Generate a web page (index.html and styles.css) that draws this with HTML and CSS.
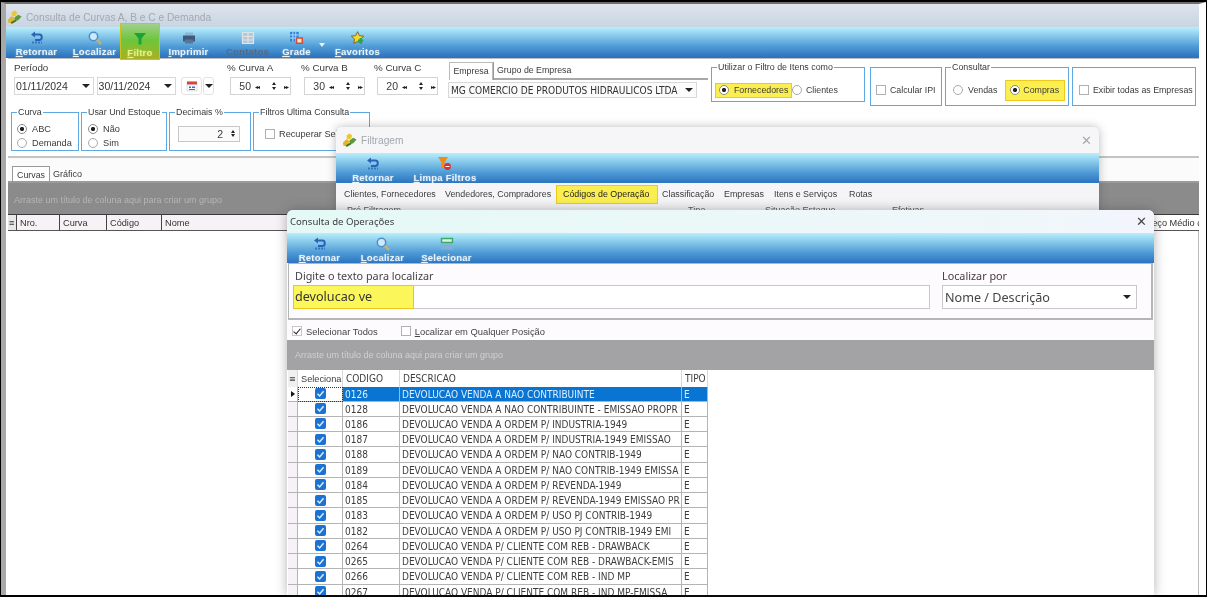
FILE: index.html
```html
<!DOCTYPE html>
<html lang="pt-BR">
<head>
<meta charset="utf-8">
<title>Consulta de Curvas A, B e C e Demanda</title>
<link rel="stylesheet" href="styles.css">
</head>
<body>
<svg class="defs" width="0" height="0" aria-hidden="true">
  <symbol id="i-back" viewBox="0 0 14 13"><path d="M3 3H9.5C12.5 3 12.5 8.5 9.5 8.5H5" fill="none" stroke="#2a62b8" stroke-width="2"/><path d="M5 0L1 3L5 6Z" fill="#2a62b8"/><path d="M2 11H12" stroke="#2a62b8" stroke-width="2" stroke-dasharray="2 1" opacity=".75"/></symbol>
  <symbol id="i-find" viewBox="0 0 14 14"><circle cx="5.5" cy="5.5" r="4.2" fill="#cfe8fa" stroke="#4a8ecb" stroke-width="1.5"/><path d="M8.8 8.8L13 13" stroke="#c9b27a" stroke-width="2"/></symbol>
  <symbol id="i-funnel" viewBox="0 0 14 14"><path d="M1 1H13L8.5 6.5V12.5H5.5V6.5Z" fill="#1aa33a"/></symbol>
  <symbol id="i-print" viewBox="0 0 14 13"><path d="M3 1H11V4H3Z" fill="#8fb4d8"/><path d="M1 4H13V10H1Z" fill="#3c5a7a"/><path d="M3 8H11V12H3Z" fill="#5a7692"/></symbol>
  <symbol id="i-grid" viewBox="0 0 14 14"><path d="M1.5 1.5H12.5V12.5H1.5ZM1.5 5.5H12.5M1.5 9H12.5M7 1.5V12.5" fill="#b9c6d4" stroke="#dde4ea" stroke-width="1.2"/></symbol>
  <symbol id="i-table" viewBox="0 0 16 14"><path d="M0 0H10V11H0Z" fill="#2b85dd"/><path d="M3.3 0V11M6.6 0V11M0 3.5H10M0 7H10" stroke="#d8ecfb" stroke-width=".9"/><path d="M7.5 7H14V13H7.5Z" fill="#f4e4d8" stroke="#d84a28" stroke-width="1.6"/></symbol>
  <symbol id="i-star" viewBox="0 0 16 16"><path d="M7.5 .8L9.6 5.3L14.6 5.9L10.9 9.3L11.9 14.2L7.5 11.8L3.1 14.2L4.1 9.3L.4 5.9L5.4 5.3Z" fill="#f5d832" stroke="#7a5a18" stroke-width="1"/><path d="M11 8V14M8 11H14" stroke="#28a83a" stroke-width="2.4"/></symbol>
  <symbol id="i-clear" viewBox="0 0 14 14"><path d="M0 0H10L6.5 5.5V11H3.5V5.5Z" fill="#f08a12"/><circle cx="9.5" cy="9.5" r="3.4" fill="#e52c2c"/><path d="M7.5 9.5H11.5" stroke="#fff" stroke-width="1.2"/></symbol>
  <symbol id="i-select" viewBox="0 0 14 13"><path d="M1.5 1H12.5V5H1.5Z" fill="#d8f0e0" stroke="#3aaa68" stroke-width="1.4"/><path d="M1 7H13V12H1Z" fill="#7fb0da"/></symbol>
  <symbol id="i-app" viewBox="0 0 16 16"><path d="M5 2L8.5 .5L11 3L9 7L5 6Z" fill="#e8c838"/><path d="M1 10L5 6.5L8.5 9L5 14L1.5 13.5Z" fill="#e2b52c"/><path d="M8 8L12 5L15.5 7L12 11L8.5 12Z" fill="#5a9a38"/><path d="M4 13L9 10L10 12L5 15Z" fill="#3f7a2c"/></symbol>
  <symbol id="i-cal" viewBox="0 0 12 12"><path d="M1 2H11V11H1Z" fill="#f4f7fb" stroke="#c8d4e0" stroke-width=".6"/><path d="M1 1.5H11V4.5H1Z" fill="#d8443a"/><path d="M3 6.5H5V8H3ZM6 6.5H9V8H6ZM3 9H9V10H3Z" fill="#2b72c8"/></symbol>
  <symbol id="i-check" viewBox="0 0 10 10"><path d="M2.2 5.2L4.2 7.2L7.8 3" fill="none" stroke="#d8ecff" stroke-width="1.4"/></symbol>
</svg>

<div class="screen">
  <main class="window">
    <header class="titlebar main-title">
      <svg class="app-icon"><use href="#i-app"/></svg>
      <span class="title-muted">Consulta de Curvas A, B e C e Demanda</span>
    </header>
    <nav class="toolbar main-tools">
      <div class="tool w-ret"><svg class="tool-icon"><use href="#i-back"/></svg><span><u>R</u>etornar</span></div>
      <div class="tool w-loc"><svg class="tool-icon"><use href="#i-find"/></svg><span><u>L</u>ocalizar</span></div>
      <div class="tool tool-active"><svg class="tool-icon"><use href="#i-funnel"/></svg><span><u>F</u>iltro</span></div>
      <div class="tool w-imp"><svg class="tool-icon"><use href="#i-print"/></svg><span><u>I</u>mprimir</span></div>
      <div class="tool tool-off w-con"><svg class="tool-icon"><use href="#i-grid"/></svg><span>Contatos</span></div>
      <div class="tool w-gra"><svg class="tool-icon"><use href="#i-table"/></svg><span><u>G</u>rade</span></div>
      <div class="tool-drop"></div>
      <div class="tool w-fav"><svg class="tool-icon"><use href="#i-star"/></svg><span><u>F</u>avoritos</span></div>
    </nav>

    <section class="filters">
      <div class="row-one">
        <div class="periodo">
          <div class="label">Período</div>
          <div class="controls">
            <div class="combo date"><span>01/11/2024</span><i class="caret"></i></div>
            <div class="combo date"><span>30/11/2024</span><i class="caret"></i></div>
            <div class="cal-btn"><svg class="cal-icon"><use href="#i-cal"/></svg></div>
            <div class="cal-drop"><i class="caret"></i></div>
          </div>
        </div>
        <div class="curva c-a"><div class="label">% Curva A</div><div class="spin"><b>50</b><i>◂◂</i><em><s></s><s class="down"></s></em><i>▸▸</i></div></div>
        <div class="curva c-b"><div class="label">% Curva B</div><div class="spin"><b>30</b><i>◂◂</i><em><s></s><s class="down"></s></em><i>▸▸</i></div></div>
        <div class="curva c-c"><div class="label">% Curva C</div><div class="spin"><b>20</b><i>◂◂</i><em><s></s><s class="down"></s></em><i>▸▸</i></div></div>
        <div class="empresa">
          <div class="emp-tabs"><span class="emp-tab">Empresa</span><span class="emp-other">Grupo de Empresa</span></div>
          <div class="combo emp-combo"><span>MG COMERCIO DE PRODUTOS HIDRAULICOS LTDA</span><i class="caret"></i></div>
        </div>
        <div class="group g-util">
          <span class="legend">Utilizar o Filtro de Itens como</span>
          <div class="hl hl-forn"><i class="radio on"></i><span>Fornecedores</span></div>
          <i class="radio"></i><span class="lbl-cli">Clientes</span>
        </div>
        <div class="group g-ipi"><i class="check"></i><span>Calcular IPI</span></div>
        <div class="group g-cons">
          <span class="legend">Consultar</span>
          <i class="radio"></i><span class="lbl-ven">Vendas</span>
          <div class="hl hl-comp"><i class="radio on"></i><span>Compras</span></div>
        </div>
        <div class="group g-exib"><i class="check"></i><span>Exibir todas as Empresas</span></div>
      </div>
      <div class="row-two">
        <div class="group g2 g-curva"><span class="legend">Curva</span>
          <div class="opt"><i class="radio on"></i><span>ABC</span></div>
          <div class="opt"><i class="radio"></i><span>Demanda</span></div>
        </div>
        <div class="group g2 g-und"><span class="legend">Usar Und Estoque</span>
          <div class="opt"><i class="radio on"></i><span>Não</span></div>
          <div class="opt"><i class="radio"></i><span>Sim</span></div>
        </div>
        <div class="group g2 g-dec"><span class="legend">Decimais %</span>
          <div class="dec-spin"><b>2</b><em><s></s><s class="down"></s></em></div>
        </div>
        <div class="group g2 g-ult"><span class="legend">Filtros Ultima Consulta</span>
          <i class="check"></i><span>Recuperar Seleção</span>
        </div>
      </div>
    </section>

    <div class="page-tabs"><span class="page-tab">Curvas</span><span class="page-other">Gráfico</span></div>
    <div class="group-band">Arraste um título de coluna aqui para criar um grupo</div>
    <div class="main-head">
      <span class="mh-ind">≡</span><span class="mh-nro">Nro.</span><span class="mh-cur">Curva</span><span class="mh-cod">Código</span><span class="mh-nome">Nome</span><span class="mh-pm">Preço Médio de</span>
    </div>
  </main>

  <aside class="dialog d-filtro">
    <header class="titlebar filtro-title">
      <svg class="app-icon"><use href="#i-app"/></svg>
      <span class="title-muted">Filtragem</span>
      <span class="close muted">✕</span>
    </header>
    <nav class="toolbar filtro-tools">
      <div class="tool w-fret"><svg class="tool-icon"><use href="#i-back"/></svg><span><u>R</u>etornar</span></div>
      <div class="tool w-flim"><svg class="tool-icon"><use href="#i-clear"/></svg><span><u>L</u>impa Filtros</span></div>
    </nav>
    <div class="filtro-tabs">
      <span class="ft t1">Clientes, Fornecedores</span>
      <span class="ft t2">Vendedores, Compradores</span>
      <span class="ft ft-on">Códigos de Operação</span>
      <span class="ft t4">Classificação</span>
      <span class="ft t5">Empresas</span>
      <span class="ft t6">Itens e Serviços</span>
      <span class="ft t7">Rotas</span>
    </div>
    <div class="filtro-cut"><span class="fc1">Pré Filtragem</span><span class="fc2">Tipo</span><span class="fc3">Situação Estoque</span><span class="fc4">Efetivas</span></div>
  </aside>

  <aside class="dialog d-oper">
    <header class="titlebar oper-title">
      <span>Consulta de Operações</span>
      <span class="close">✕</span>
    </header>
    <nav class="toolbar oper-tools">
      <div class="tool w-oret"><svg class="tool-icon"><use href="#i-back"/></svg><span><u>R</u>etornar</span></div>
      <div class="tool w-oloc"><svg class="tool-icon"><use href="#i-find"/></svg><span><u>L</u>ocalizar</span></div>
      <div class="tool w-osel"><svg class="tool-icon"><use href="#i-select"/></svg><span><u>S</u>elecionar</span></div>
    </nav>
    <div class="search">
      <div class="search-main">
        <div class="search-label">Digite o texto para localizar</div>
        <div class="search-input"><span class="search-hl">devolucao ve</span></div>
      </div>
      <div class="search-side">
        <div class="search-label side-label">Localizar por</div>
        <div class="search-select"><span>Nome / Descrição</span><i class="caret"></i></div>
      </div>
    </div>
    <div class="opts">
      <span class="opt-check"><i class="check tick"></i>Selecionar Todos</span>
      <span class="opt-check opt-second"><i class="check"></i><span><u>L</u>ocalizar em Qualquer Posição</span></span>
    </div>
    <div class="oper-band">Arraste um título de coluna aqui para criar um grupo</div>
    <div class="grid">
      <div class="g-row g-head"><span class="ind">≡</span><span class="head-sel">Seleciona</span><span>CODIGO</span><span>DESCRICAO</span><span>TIPO</span></div>
      <div class="g-row g-sel"><span class="ind"><i class="pointer"></i></span><span class="sel"><svg class="box"><use href="#i-check"/></svg></span><span>0126</span><span>DEVOLUCAO VENDA A NAO CONTRIBUINTE</span><span>E</span></div>
      <div class="g-row"><span class="ind"></span><span class="sel"><svg class="box"><use href="#i-check"/></svg></span><span>0128</span><span>DEVOLUCAO VENDA A NAO CONTRIBUINTE - EMISSAO PROPR</span><span>E</span></div>
      <div class="g-row"><span class="ind"></span><span class="sel"><svg class="box"><use href="#i-check"/></svg></span><span>0186</span><span>DEVOLUCAO VENDA A ORDEM P/ INDUSTRIA-1949</span><span>E</span></div>
      <div class="g-row"><span class="ind"></span><span class="sel"><svg class="box"><use href="#i-check"/></svg></span><span>0187</span><span>DEVOLUCAO VENDA A ORDEM P/ INDUSTRIA-1949 EMISSAO</span><span>E</span></div>
      <div class="g-row"><span class="ind"></span><span class="sel"><svg class="box"><use href="#i-check"/></svg></span><span>0188</span><span>DEVOLUCAO VENDA A ORDEM P/ NAO CONTRIB-1949</span><span>E</span></div>
      <div class="g-row"><span class="ind"></span><span class="sel"><svg class="box"><use href="#i-check"/></svg></span><span>0189</span><span>DEVOLUCAO VENDA A ORDEM P/ NAO CONTRIB-1949 EMISSA</span><span>E</span></div>
      <div class="g-row"><span class="ind"></span><span class="sel"><svg class="box"><use href="#i-check"/></svg></span><span>0184</span><span>DEVOLUCAO VENDA A ORDEM P/ REVENDA-1949</span><span>E</span></div>
      <div class="g-row"><span class="ind"></span><span class="sel"><svg class="box"><use href="#i-check"/></svg></span><span>0185</span><span>DEVOLUCAO VENDA A ORDEM P/ REVENDA-1949 EMISSAO PR</span><span>E</span></div>
      <div class="g-row"><span class="ind"></span><span class="sel"><svg class="box"><use href="#i-check"/></svg></span><span>0183</span><span>DEVOLUCAO VENDA A ORDEM P/ USO PJ CONTRIB-1949</span><span>E</span></div>
      <div class="g-row"><span class="ind"></span><span class="sel"><svg class="box"><use href="#i-check"/></svg></span><span>0182</span><span>DEVOLUCAO VENDA A ORDEM P/ USO PJ CONTRIB-1949 EMI</span><span>E</span></div>
      <div class="g-row"><span class="ind"></span><span class="sel"><svg class="box"><use href="#i-check"/></svg></span><span>0264</span><span>DEVOLUCAO VENDA P/ CLIENTE COM REB - DRAWBACK</span><span>E</span></div>
      <div class="g-row"><span class="ind"></span><span class="sel"><svg class="box"><use href="#i-check"/></svg></span><span>0265</span><span>DEVOLUCAO VENDA P/ CLIENTE COM REB - DRAWBACK-EMIS</span><span>E</span></div>
      <div class="g-row"><span class="ind"></span><span class="sel"><svg class="box"><use href="#i-check"/></svg></span><span>0266</span><span>DEVOLUCAO VENDA P/ CLIENTE COM REB - IND MP</span><span>E</span></div>
      <div class="g-row"><span class="ind"></span><span class="sel"><svg class="box"><use href="#i-check"/></svg></span><span>0267</span><span>DEVOLUCAO VENDA P/ CLIENTE COM REB - IND MP-EMISSA</span><span>E</span></div>
    </div>
  </aside>
</div>
</body>
</html>
```
FILE: styles.css
```css
* { box-sizing: border-box; }
html, body { margin: 0; padding: 0; background: #000; overflow: hidden; }
body { width: 1207px; height: 597px; font-family: "Liberation Sans", Arial, sans-serif; font-size: 9px; color: #3a3a3a; }
.defs { position: absolute; }
i, em, s { font-style: normal; text-decoration: none; display: block; }

.screen { position: relative; width: 1207px; height: 597px; background: #000; overflow: hidden; padding: 2px 1px 2px 1px; filter: blur(.3px); }

.window { height: 100%; background: #fff; border-top: 2px solid #6d6d6d; border-left: 5px solid #a8a8a8; border-right: 7px solid #fff; box-shadow: inset -1px 0 0 #bbb; padding-left: 2px; display: flex; flex-direction: column; position: relative; }

.titlebar { display: flex; align-items: center; flex: none; }
.title-muted { color: #a3a8ae; font-size: 10.2px; }
.app-icon { width: 15px; height: 15px; flex: none; }
.close { margin-left: auto; font-size: 13px; color: #444; font-family: "DejaVu Sans", sans-serif; }
.close.muted { color: #a8a8a8; }

.main-title { height: 23px; padding: 3px 0 0 1px; gap: 4px; background: linear-gradient(#dfe4ec, #c7d5e2); margin-left: -2px; }

.toolbar { display: flex; flex: none; background: linear-gradient(#b9eefc 0%, #97d6f1 20%, #4f9bd6 65%, #2c74bf 100%); }
.main-tools { height: 31px; padding-left: 9px; margin-left: -2px; border-bottom: 1px solid #2c74bf; }
.tool { display: flex; flex-direction: column; align-items: center; flex: none; color: #e8f4fb; font-weight: bold; font-size: 9.5px; letter-spacing: .25px; line-height: 11px; padding-top: 4px; white-space: nowrap; }
.tool span { text-shadow: 0 0 2px rgba(255,255,255,.4); }
.tool u { text-decoration: underline; }
.tool-icon { width: 14px; height: 14px; margin-bottom: 1px; flex: none; }
.w-ret { width: 43px; }
.w-loc { width: 43px; margin-left: 15px; }
.tool-active { width: 40px; margin: -4px 0 0 4px; height: 37px; padding-top: 8px; position: relative; z-index: 1; background: linear-gradient(#a2cf8c, #6cc63c 45%, #a9b020); border: 1px solid #c8c41a; color: #eaf27a; }
.w-imp { width: 43px; margin-left: 7px; }
.w-con { width: 43px; margin-left: 16px; }
.tool-off { color: #546a82; }
.tool-off span { text-shadow: none; }
.w-gra { width: 29px; margin-left: 13px; }
.tool-drop { width: 0; height: 0; margin: 16px 0 0 8px; border: 3.5px solid transparent; border-top: 4px solid #e8f4fb; border-bottom: 0; }
.w-fav { width: 45px; margin-left: 10px; }

.filters { height: 100px; flex: none; border-top: 1px solid #bdbdbd; border-bottom: 2px solid #c4c4c4; background: #fff; }
.row-one { display: flex; align-items: flex-start; height: 53px; padding-left: 6px; }
.label { font-size: 9.8px; line-height: 12px; color: #3a3a3a; }
.periodo { width: 200px; margin-top: 3px; flex: none; }
.controls { display: flex; margin-top: 3px; align-items: center; }
.combo { display: flex; align-items: center; height: 18px; background: #fff; border: 1px solid #d8d8d8; font-size: 10.5px; color: #333; padding-left: 1px; }
.combo span { flex: 1; white-space: nowrap; overflow: hidden; }
.caret { width: 0; height: 0; margin: 0 3px; border: 4px solid transparent; border-top: 4px solid #222; border-bottom: 0; flex: none; }
.date { width: 80px; margin-right: 3px; }
.cal-btn { width: 21px; height: 18px; margin-left: 2px; border: 1px solid #e2e2e2; border-radius: 3px; display: flex; align-items: center; justify-content: center; }
.cal-icon { width: 12px; height: 12px; }
.cal-drop { width: 11px; height: 18px; margin-left: 1px; border: 1px solid #e2e2e2; border-radius: 3px; display: flex; align-items: center; }
.cal-drop .caret { margin: 0 0 0 1px; border-width: 4px; border-top-width: 4px; }
.curva { flex: none; margin-top: 3px; width: 61px; }
.curva .label { margin-left: -3px; white-space: nowrap; }
.c-a { margin-left: 16px; }
.c-b { margin-left: 13px; }
.c-c { margin-left: 12px; }
.spin { height: 18px; margin-top: 3px; border: 1px solid #d4d4d4; display: flex; align-items: center; font-size: 10.5px; }
.spin b { font-weight: normal; width: 20px; text-align: right; flex: none; }
.spin > i { font-size: 6px; letter-spacing: -1.5px; color: #222; width: 11px; flex: none; margin-left: 4px; }
.spin em { width: 12px; flex: none; margin-left: 2px; }
em s { width: 0; height: 0; margin: 1.5px auto; border: 2.5px solid transparent; border-bottom: 3px solid #222; border-top: 0; }
em s.down { border-bottom: 0; border-top: 3px solid #222; }
.empresa { width: 260px; margin-left: 10px; margin-top: 3px; flex: none; }
.emp-tabs { display: flex; height: 18px; border-bottom: 2px solid #a8a8a8; margin-left: 1px; }
.emp-tab { width: 44px; height: 18px; border: 1px solid #bbb; border-bottom: 0; background: #fff; font-size: 8.8px; line-height: 17px; text-align: center; box-shadow: 1px 0 0 #999; }
.emp-other { font-size: 8.8px; line-height: 17px; margin-left: 4px; }
.emp-combo { width: 249px; height: 16px; margin-top: 2px; background: #fbfbfb; font-family: "DejaVu Sans Condensed", "Liberation Sans", sans-serif; font-size: 10.1px; }
.emp-combo span { padding-left: 1px; }

.group { position: relative; flex: none; border: 1px solid #5ea8e4; display: flex; align-items: center; font-size: 8.8px; color: #3a3a3a; white-space: nowrap; }
.legend { position: absolute; top: -7px; left: 5px; background: #fff; font-size: 8.9px; line-height: 12px; padding: 0 1px; white-space: nowrap; color: #3a3a3a; }
.radio { width: 10px; height: 10px; flex: none; border-radius: 50%; border: 1px solid #a8a8a8; background: #fff; position: relative; }
.radio.on { background: radial-gradient(circle, #222 0 1.8px, #fff 2.4px); border-color: #8a8a8a; }
.check { width: 10px; height: 10px; flex: none; border: 1px solid #b0b0b0; background: #fff; }
.hl { display: flex; align-items: center; background: #fbee50; border: 1px solid #efc91c; flex: none; }
.g-util { width: 154px; height: 35px; margin: 8px 0 0 3px; padding: 11px 0 0 3px; }
.hl-forn { width: 77px; height: 15px; padding-left: 3px; gap: 5px; }
.lbl-cli { margin-left: 4px; }
.g-ipi { width: 72px; height: 39px; margin: 8px 0 0 5px; padding: 6px 0 0 5px; gap: 4px; }
.g-cons { width: 124px; height: 39px; margin: 8px 0 0 3px; padding: 7px 0 0 7px; }
.lbl-ven { margin-left: 5px; }
.hl-comp { width: 60px; height: 21px; margin-left: 8px; padding-left: 4px; gap: 3px; }
.g-exib { width: 124px; height: 39px; margin: 8px 0 0 3px; padding: 6px 0 0 6px; gap: 4px; }

.row-two { display: flex; padding-left: 3px; }
.g2 { height: 39px; margin-right: 2px; }
.g-curva { width: 68px; display: block; padding: 9px 0 0 5px; }
.g-und { width: 86px; display: block; padding: 9px 0 0 6px; }
.opt { display: flex; align-items: center; gap: 5px; height: 14px; font-size: 9.2px; }
.g-dec { width: 82px; padding: 4px 0 0 8px; }
.dec-spin { width: 62px; height: 16px; border: 1px solid #c8c8c8; display: flex; align-items: center; justify-content: flex-end; font-size: 10.5px; background: #fbfbfb; }
.dec-spin b { font-weight: normal; }
.dec-spin em { width: 13px; margin-left: 3px; }
.g-ult { width: 117px; padding: 4px 0 0 11px; gap: 4px; font-size: 9.2px; overflow: visible; }

.page-tabs { display: flex; height: 25px; flex: none; align-items: flex-end; padding-left: 4px; background: #fbfbfb; border-bottom: 2px solid #9b9b9b; }
.page-tab { width: 38px; height: 15px; background: #fff; border: 1px solid #999; border-bottom: 0; line-height: 16px; text-align: center; font-size: 8.8px; }
.page-other { margin-left: 3px; line-height: 16px; height: 15px; font-size: 9px; }
.group-band { height: 31px; flex: none; background: #8b8b8c; color: #b5b5b5; font-size: 9px; line-height: 35px; padding-left: 6px; }
.main-head { display: flex; height: 17px; flex: none; border-top: 1px solid #3a3a3a; border-bottom: 1px solid #555; background: #f6f2f6; font-size: 9.2px; line-height: 17px; color: #333; }
.main-head span { border-right: 1px solid #444; padding-left: 3px; flex: none; white-space: nowrap; overflow: hidden; }
.mh-ind { width: 9px; padding-left: 1px !important; background: #e8e8e8; }
.mh-nro { width: 43px; }
.mh-cur { width: 47px; }
.mh-cod { width: 55px; }
.mh-nome { width: 979px; }
.mh-pm { flex: 1 !important; border-right: 0 !important; padding-left: 2px !important; background: #fff; }

.dialog { position: absolute; overflow: hidden; border-radius: 6px 6px 0 0; box-shadow: 0 0 10px rgba(60,60,60,.35); }

.d-filtro { left: 336px; top: 127px; width: 763px; height: 90px; background: #f5f4f7; }
.filtro-title { height: 26px; padding: 0 7px 0 6px; gap: 4px; background: #f6f5f8; }
.filtro-tools { height: 30px; padding-left: 15px; }
.w-fret { width: 44px; }
.w-flim { width: 62px; margin-left: 19px; }
.filtro-tabs { display: flex; align-items: center; height: 22px; position: relative; background: #f5f4f7; font-size: 8.9px; white-space: nowrap; }
.ft { flex: none; }
.t1 { margin-left: 8px; width: 101px; }
.t2 { width: 111px; }
.ft-on { width: 102px; height: 19px; line-height: 16px; padding-left: 6px; background: #fbee50; border: 1px solid #efc91c; color: #222; }
.t4 { margin-left: 4px; width: 62px; }
.t5 { width: 50px; }
.t6 { width: 75px; }
.filtro-cut { position: relative; height: 12px; font-size: 9px; color: #555; }
.filtro-cut span { position: absolute; top: 0; }
.fc1 { left: 11px; }
.fc2 { left: 352px; }
.fc3 { left: 429px; }
.fc4 { left: 556px; }

.d-oper { left: 287px; top: 210px; width: 867px; height: 385px; background: #fdfbfe; display: flex; flex-direction: column; box-shadow: 0 0 12px rgba(60,60,60,.4); }
.oper-title { height: 23px; padding: 0 7px 0 3px; background: linear-gradient(90deg, #e4f9f5, #f2f6fc); font-family: "Noto Sans", sans-serif; font-size: 9.6px; color: #3c3c3c; }
.oper-tools { height: 30px; padding-left: 11px; }
.w-oret { width: 43px; }
.w-oloc { width: 43px; margin-left: 20px; }
.w-osel { width: 51px; margin-left: 17px; }
.search { height: 57px; flex: none; margin: 0 1px; display: flex; padding: 3px 0 0 4px; border: 1px solid #b5b5b5; border-width: 1px 2px 2px 1px; font-family: "Noto Sans", sans-serif; }
.search-main { width: 637px; }
.search-side { margin-left: 12px; width: 195px; }
.search-label { font-size: 10.8px; line-height: 14px; color: #444; padding-left: 2px; margin-top: 2px; }
.side-label { color: #4a3a3a; padding-left: 0; }
.search-input { height: 24px; margin-top: 2px; border: 1px solid #c8c8c8; background: #fff; }
.search-hl { display: block; width: 121px; height: 24px; margin: -1px; background: #fbf75a; border: 1px solid #ecc81c; font-size: 12.6px; line-height: 21px; padding-left: 1px; color: #333; }
.search-select { height: 24px; margin-top: 2px; border: 1px solid #c8c8c8; background: #fff; display: flex; align-items: center; justify-content: space-between; font-size: 12.6px; padding-left: 2px; color: #444; }
.search-select .caret { margin-right: 5px; }
.opts { height: 20px; flex: none; display: flex; align-items: center; padding: 2px 0 0 5px; font-size: 9.4px; color: #444; }
.opt-check { display: flex; align-items: center; gap: 4px; }
.opt-second { margin-left: 23px; }
.opt-check .check { width: 10px; height: 10px; }
.tick { position: relative; border-color: #c8c8c8; }
.tick::after { content: ""; position: absolute; left: 2px; top: 0; width: 3px; height: 6px; border: solid #222; border-width: 0 1.6px 1.6px 0; transform: rotate(40deg); }
.oper-band { height: 30px; flex: none; background: #a3a2a4; color: #d0d0d2; font-size: 9px; line-height: 31px; padding-left: 8px; }
.grid { flex: 1; overflow: hidden; background: #fff; padding-left: 1px; }
.g-row { display: grid; grid-template-columns: 10px 45px 57px 282px 26px; width: 420px; height: 15.25px; font-family: "DejaVu Sans Condensed", "Liberation Sans", sans-serif; font-size: 10px; line-height: 15px; color: #3c3c3c; white-space: nowrap; }
.g-row > span { border-right: 1px solid #b4b4b4; border-bottom: 1px solid #b4b4b4; padding-left: 2px; overflow: hidden; }
.g-head { height: 16.5px; line-height: 18px; }
.g-head > span { border-bottom: 0; border-right-color: #d8d8d8; padding-left: 3px; }
.g-head > .head-sel { font-family: "Liberation Sans", Arial, sans-serif; font-size: 9.2px; padding-left: 3px; }
.g-head .ind { padding-left: 1px; font-size: 9px; background: #f0f0f0; }
.ind { background: #f7f2f7; position: relative; }
.sel { display: flex; align-items: center; justify-content: center; padding-left: 0 !important; }
.box { width: 11px; height: 11px; background: #1a73d2; border-radius: 2px; flex: none; }
.g-sel { background: #0a74d3; color: #dcefff; height: 15px; }
.g-sel .sel { background: #fff; outline: 1px dotted #333; outline-offset: -1px; }
.g-sel .ind { background: #fff; }
.pointer { width: 0; height: 0; margin-top: 4px; border: 3.5px solid transparent; border-left: 4px solid #111; border-right: 0; margin-left: 1px; }
```
